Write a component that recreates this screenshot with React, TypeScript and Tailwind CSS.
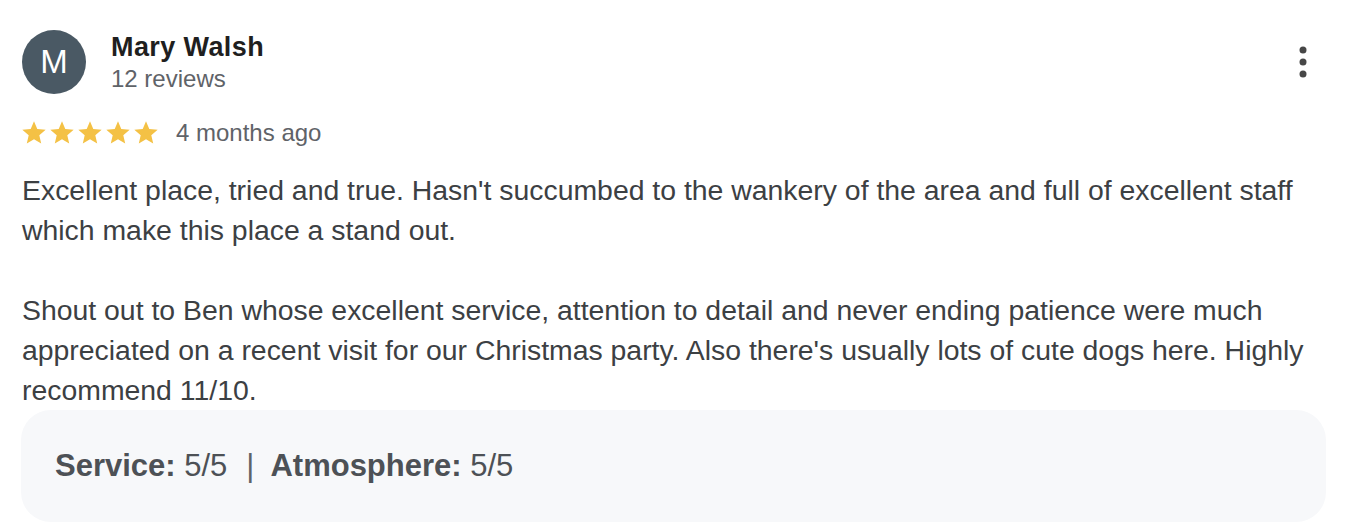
const stars = [0, 1, 2, 3, 4]

function Star() {
  return (
    <svg width="28" height="28" viewBox="0 0 24 24" className="shrink-0">
      <path
        fill="#f4c145"
        d="M12 17.27L18.18 21l-1.64-7.03L22 9.24l-7.19-.61L12 2 9.19 8.63 2 9.24l5.46 4.73L5.82 21z"
      />
    </svg>
  )
}

export default function App() {
  return (
    <div className="min-h-[532px] bg-white pl-[22px] pr-[26px] pt-[30px] font-['Liberation_Sans',Arial,sans-serif]">
      {/* header */}
      <div className="flex items-start">
        <div className="flex h-16 w-16 shrink-0 items-center justify-center rounded-full bg-[#4a5964] text-[33px] text-white">
          M
        </div>
        <div className="ml-[25px] flex-1 pt-[3px]">
          <div className="text-[27px] font-bold leading-[28px] tracking-[0.4px] text-[#1f1f1f]">Mary Walsh</div>
          <div className="mt-[3px] text-[24px] leading-[30px] text-[#5f6368]">12 reviews</div>
        </div>
        <button className="mt-2 -mr-[1px] h-12 w-12 shrink-0" aria-label="More options">
          <svg width="48" height="48" viewBox="0 0 48 48">
            <circle cx="24" cy="12" r="3.5" fill="#474747" />
            <circle cx="24" cy="24" r="3.5" fill="#474747" />
            <circle cx="24" cy="36" r="3.5" fill="#474747" />
          </svg>
        </button>
      </div>

      {/* rating */}
      <div className="mt-6 flex h-[30px] items-center">
        <div className="-ml-[2px] flex">
          {stars.map((s) => (
            <Star key={s} />
          ))}
        </div>
        <span className="ml-4 text-[24px] leading-[30px] text-[#5f6368]">4 months ago</span>
      </div>

      {/* body */}
      <div className="mt-[22px] text-[28.4px] leading-[40px] text-[#3c4043]">
        <p>
          Excellent place, tried and true. Hasn't succumbed to the wankery of the area and full of excellent
          staff which make this place a stand out.
        </p>
        <p className="mt-10">
          Shout out to Ben whose excellent service, attention to detail and never ending patience were much
          appreciated on a recent visit for our Christmas party. Also there's usually lots of cute dogs here.
          Highly recommend 11/10.
        </p>
      </div>

      {/* attributes */}
      <div className="-ml-px flex h-[112px] items-center rounded-[30px] bg-[#f7f8fa] pl-[34px] text-[31px] leading-[36px] text-[#4d5156]">
        <span className="font-bold">Service:</span>
        <span>&nbsp;5/5</span>
        <span className="ml-[19px] mr-[16px] text-[#5f6368]">|</span>
        <span className="font-bold">Atmosphere:</span>
        <span>&nbsp;5/5</span>
      </div>
    </div>
  )
}
